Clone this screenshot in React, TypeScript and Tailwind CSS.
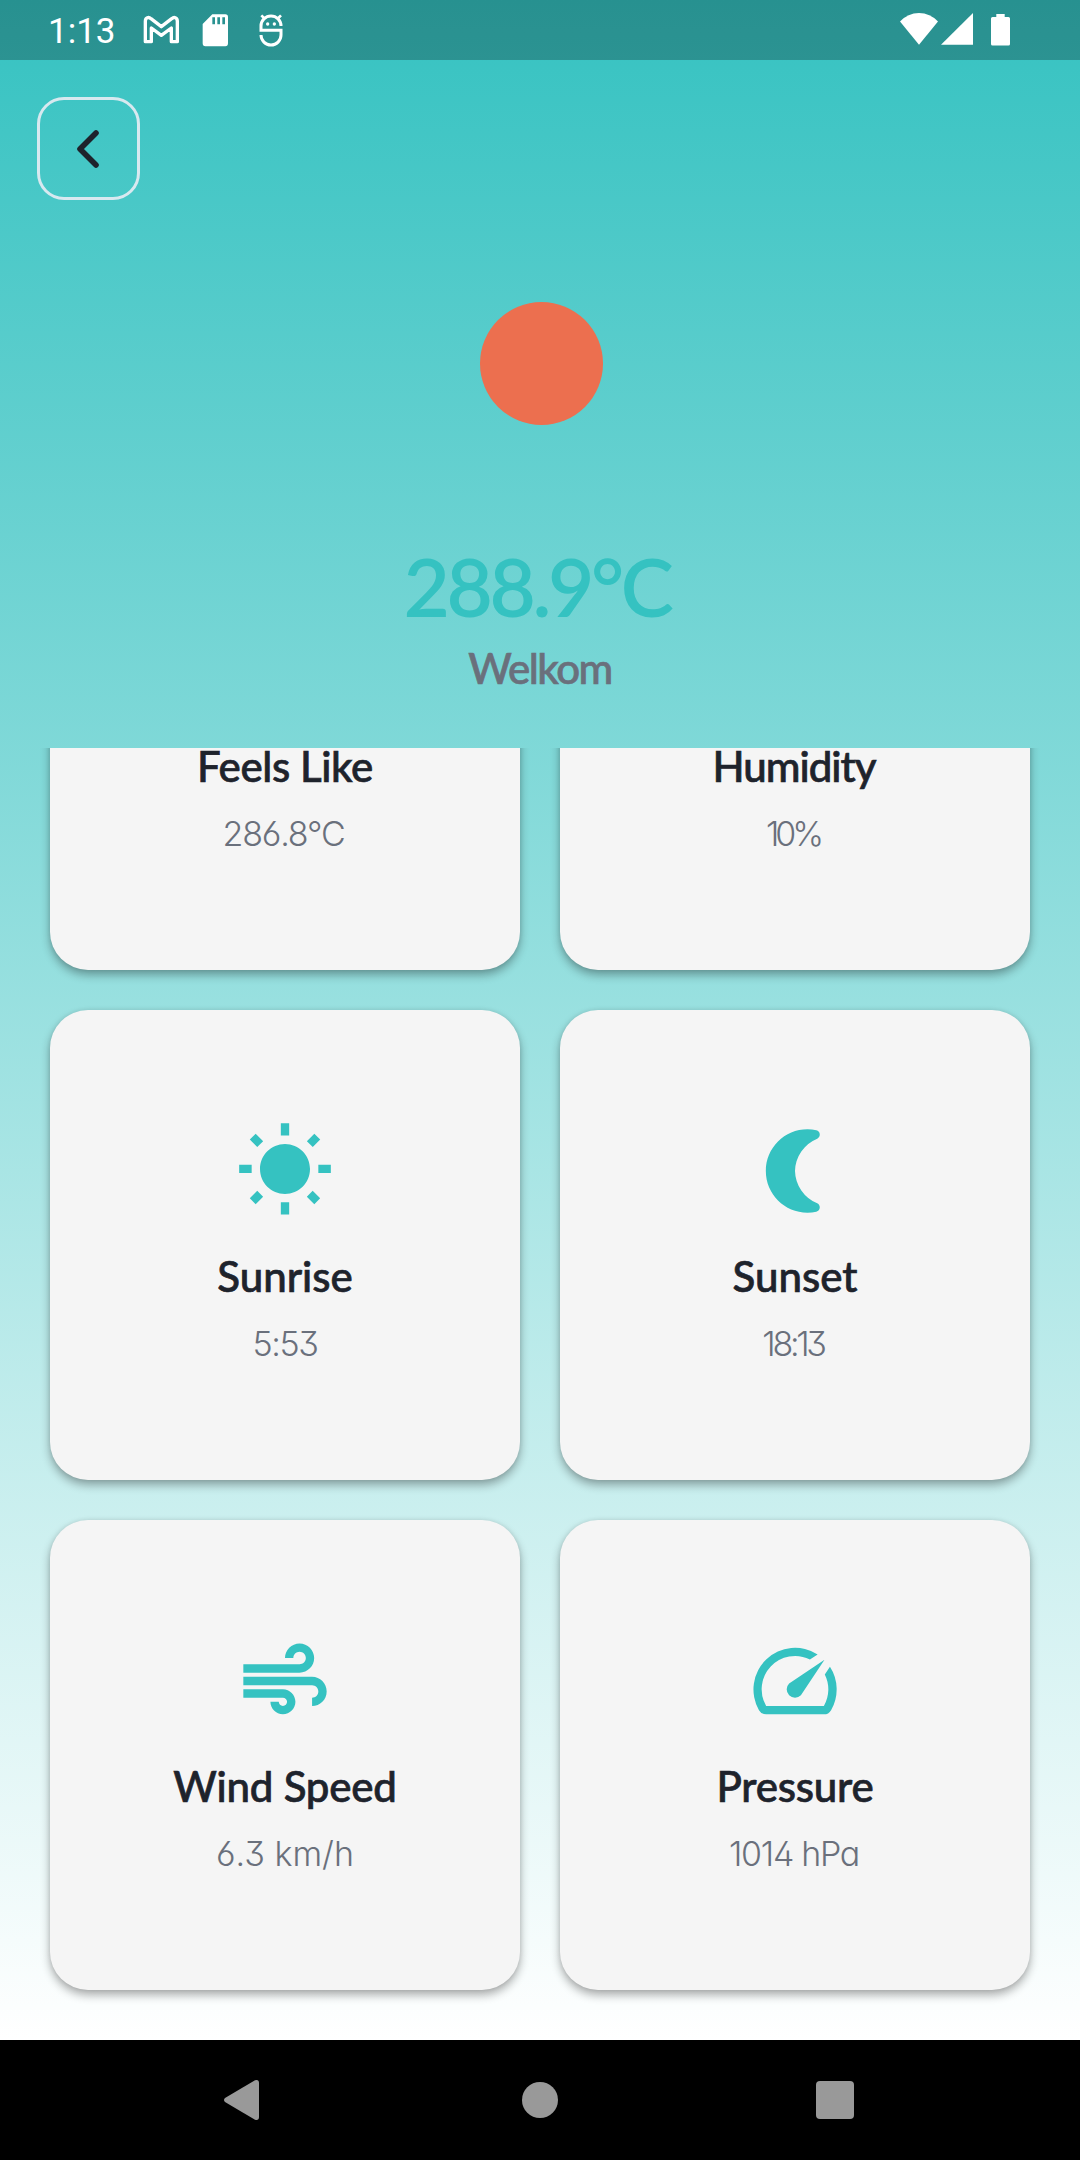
import type { ReactNode } from 'react';
import { MdAir, MdSpeed, MdWbSunny } from 'react-icons/md';

function StatusBar() {
  return (
    <div className="flex h-[60px] shrink-0 items-start bg-black/25 text-white">
      <span className="ml-12 mt-[11px] font-['Roboto',sans-serif] text-[35px] leading-[42px]">1:13</span>
      <svg className="ml-[27px] mt-[15px] h-[29px] w-9" viewBox="429 45 108 87" fill="none" stroke="currentColor" strokeWidth="10" strokeLinejoin="round">
        <path d="M436 64V125H454V84L484 106L514 84V125H532V64C532 52 522 50 515 56L484 80L453 56C446 50 436 52 436 64Z" />
      </svg>
      <svg className="ml-[23px] mt-[14px] h-[33px] w-[27px]" viewBox="609 42 81 99" fill="currentColor">
        <path fillRule="evenodd" d="M640 43H679Q687 43 687 51V130Q687 139 679 139H619Q611 139 611 130V72ZM640 52V73H648V52ZM655 52V73H663V52ZM670 52V73H678V52Z" />
      </svg>
      <svg className="ml-[30px] mt-[14px] h-[33px] w-[24px]" viewBox="778 42 72 99" fill="none" stroke="currentColor" strokeWidth="9">
        <path d="M784 95V78A30 30 0 0 1 844 78M781 91H844V105A30 30 0 0 1 784 105" />
        <path d="M785 46L793 54M844 46L836 54" strokeWidth="8" />
        <g fill="currentColor" stroke="none">
          <circle cx="804" cy="72" r="5" />
          <circle cx="824" cy="72" r="5" />
        </g>
      </svg>
      <div className="mt-[13px] ml-auto mr-[70px] flex items-start">
        <svg className="h-8 w-[38px]" viewBox="0 0 38 32" fill="currentColor">
          <path d="M0 8.5Q8 0 19 0T38 8.5L19 31.7Z" />
        </svg>
        <svg className="ml-[3px] h-8 w-8" viewBox="0 0 32 32" fill="currentColor">
          <path d="M32 0V31.7H0Z" />
        </svg>
        <svg className="ml-[18px] h-[33px] w-[19px]" viewBox="0 0 19 33" fill="currentColor">
          <path d="M5.3 1H13.7V4H17.5Q19 4 19 5.5V31Q19 32.5 17.5 32.5H1.5Q0 32.5 0 31V5.5Q0 4 1.5 4H5.3Z" />
        </svg>
      </div>
    </div>
  );
}

function MoonIcon() {
  return (
    <svg className="size-[100px]" viewBox="0 0 24 24" fill="currentColor">
      <path d="M15 2C9.48 2 5 6.48 5 12s4.48 10 10 10c.73 0 1.44-.08 2.12-.23 1.03-.22 1.1-1.6.22-2.02A8.6 8.6 0 0 1 12 12a8.6 8.6 0 0 1 5.34-7.75c.88-.42.81-1.8-.22-2.02C16.44 2.08 15.73 2 15 2z" />
    </svg>
  );
}

type Metric = { title: string; value: string; titleClass: string; valueClass: string; icon?: ReactNode };

const metrics: Metric[] = [
  { title: 'Feels Like', value: '286.8°C', titleClass: 'tracking-[-0.4px]', valueClass: 'tracking-[-1.2px] mr-[3px]' },
  { title: 'Humidity', value: '10%', titleClass: 'tracking-[-1px] mr-[2px]', valueClass: 'tracking-[-4px] mr-[4px]' },
  { title: 'Sunrise', value: '5:53', titleClass: '', valueClass: 'tracking-[-1.4px]', icon: <MdWbSunny size={100} /> },
  { title: 'Sunset', value: '18:13', titleClass: '', valueClass: 'tracking-[-3.3px] mr-[4px]', icon: <MoonIcon /> },
  { title: 'Wind Speed', value: '6.3 km/h', titleClass: 'tracking-[-0.2px]', valueClass: '', icon: <MdAir size={100} /> },
  { title: 'Pressure', value: '1014 hPa', titleClass: 'tracking-[-0.2px]', valueClass: 'tracking-[-1.3px] mr-[2px]', icon: <MdSpeed size={100} /> },
];

function MetricCard({ title, value, titleClass, valueClass, icon }: Metric) {
  return (
    <div className="flex h-[470px] flex-col items-center rounded-[38px] bg-[#f5f5f5] pt-[111px] shadow-[0_5px_10px_rgba(0,0,0,0.32),0_0_4px_rgba(0,0,0,0.08)]">
      <div className="h-[100px] text-[#35c2c1]">{icon}</div>
      <div className={`mt-[30px] text-[42px] leading-[50px] font-medium text-[#1e232c] [-webkit-text-stroke:0.7px_#1e232c] ${titleClass}`}>{title}</div>
      <div className={`mt-[21px] font-['Inter',sans-serif] text-[34px] leading-[44px] font-light text-[#6a707c] [font-feature-settings:'ss01','cv11'] ${valueClass}`}>{value}</div>
    </div>
  );
}

function NavigationBar() {
  return (
    <div className="flex h-[120px] shrink-0 items-center bg-black pl-[224px] text-[#999999]">
      <svg className="h-10 w-[35px]" viewBox="0 0 35 40" fill="currentColor">
        <path d="M1 18L31 .3Q35-.8 35 3V37Q35 40.8 31 39.7L1 22Q-1 20 1 18Z" />
      </svg>
      <div className="ml-[263px] size-9 rounded-full bg-[#999999]" />
      <div className="ml-[258px] h-[38px] w-[38px] rounded-[4px] bg-[#999999]" />
    </div>
  );
}

export default function App() {
  return (
    <div className="flex h-[2160px] w-[1080px] flex-col overflow-hidden font-['Lato',sans-serif]">
      <div className="flex h-[2040px] flex-col bg-linear-to-b/srgb from-[#35c2c1] to-white">
        <StatusBar />
        <div className="flex h-[688px] shrink-0 flex-col items-center pt-[37px]">
          <button className="ml-[37px] flex size-[103px] shrink-0 items-center justify-center self-start rounded-[27px] border-3 border-[#e8ecf4]/90">
            <svg className="mr-px h-[40px] w-[24px]" viewBox="0 0 24 40" fill="none" stroke="#1e232c" strokeWidth="5.6" strokeLinecap="round" strokeLinejoin="round">
              <path d="M20 4L4 20L20 36" />
            </svg>
          </button>
          <div className="mt-[102px] ml-[3px] size-[123px] shrink-0 rounded-full bg-[#ec6f4f]" />
          <div className="mt-[113px] mr-[6px] text-[80px] leading-[96px] font-semibold tracking-[-3.4px] text-[#35c2c1]">288.9°C</div>
          <div className="mt-[9px] text-[42px] leading-[50px] font-medium tracking-[-1.5px] text-[#6a707c] [-webkit-text-stroke:0.7px_#6a707c]">Welkom</div>
        </div>
        <div className="min-h-0 flex-1 overflow-hidden">
          <div className="-mt-[248px] grid grid-cols-2 gap-10 px-[50px]">
            {metrics.map((metric) => (
              <MetricCard key={metric.title} {...metric} />
            ))}
          </div>
        </div>
      </div>
      <NavigationBar />
    </div>
  );
}
